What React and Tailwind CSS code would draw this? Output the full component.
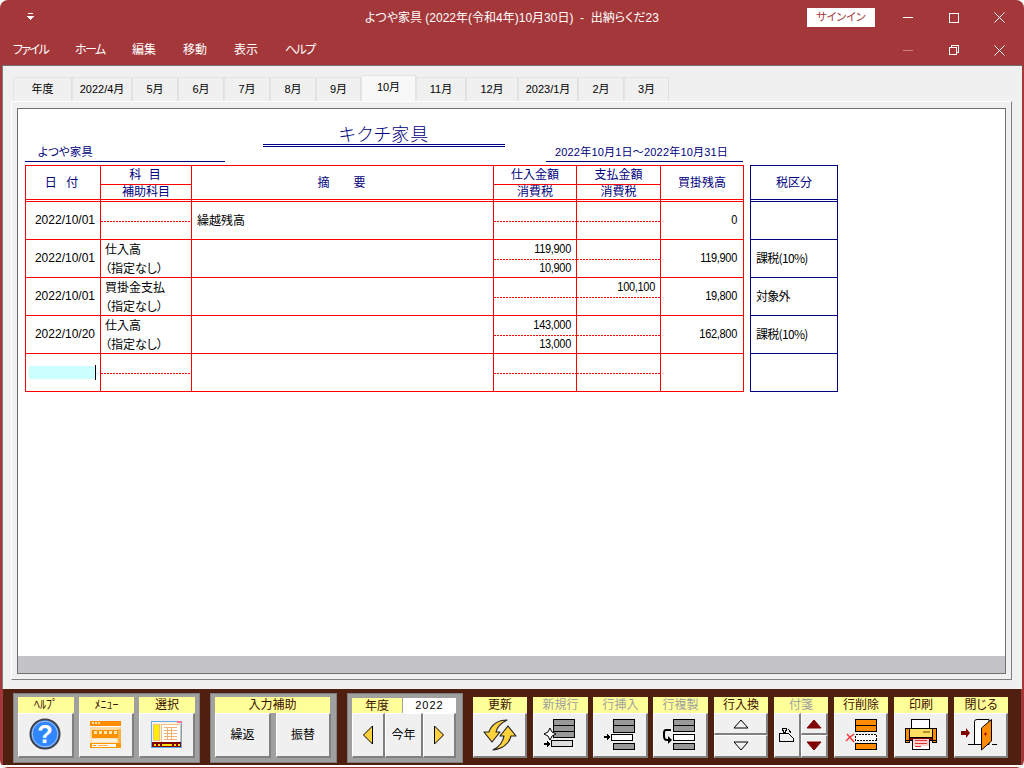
import React from "react";

const FF = { fontFamily: '"Liberation Sans","Noto Sans CJK JP",sans-serif' };

const tabs = [["年度",59],["2022/4月",60],["5月",46],["6月",46],["7月",46],["8月",46],["9月",45],["10月",55,1],["11月",50],["12月",52],["2023/1月",60],["2月",46],["3月",45]];

const Cols = [75,91,302,83,84,83];

function Two({ w, top, bottom, align = "left" }) {
  const t = align === "right" ? "justify-end pr-[5px]" : "pl-[4px]";
  return (
    <div className="flex flex-col shrink-0 border-r border-[#ff0000]" style={{ width: w }}>
      <div className={"h-[19px] flex items-center pb-px " + t}>{top}</div>
      <div className="h-px bg-[repeating-linear-gradient(90deg,#ff0000_0,#ff0000_2px,transparent_2px,transparent_3px)]" />
      <div className={"flex-1 flex items-center " + t}>{bottom}</div>
    </div>
  );
}

function Num({ children }) {
  return <span className="text-[11px] leading-none tracking-[-0.3px] text-black inline-block scale-y-[1.1]">{children}</span>;
}

function Jp({ children }) {
  return <span className="text-[12px] text-black font-['Noto_Sans_CJK_JP',sans-serif]">{children}</span>;
}

function Row({ date, k1, k2, t, p1, p2, s1, s2, bal, active }) {
  return (
    <div className="flex h-[38px] border-b border-[#ff0000]">
      <div className="w-[75px] shrink-0 border-r border-[#ff0000] flex items-center justify-end pr-[4px] pb-px">
        {active ? (
          <div className="flex items-center">
            <div className="w-[66px] h-[13px] bg-[#ccffff]" />
            <div className="w-px h-[15px] bg-black" />
          </div>
        ) : <span className="text-[12px] leading-none text-black mr-px">{date}</span>}
      </div>
      <Two w={91} top={k1 && <Jp>{k1}</Jp>} bottom={k2 && <Jp>{k2}</Jp>} />
      <div className="w-[302px] shrink-0 border-r border-[#ff0000] flex items-center pl-[5px] pb-[2px]">{t && <Jp>{t}</Jp>}</div>
      <Two w={83} align="right" top={p1 && <Num>{p1}</Num>} bottom={p2 && <Num>{p2}</Num>} />
      <Two w={84} align="right" top={s1 && <Num>{s1}</Num>} bottom={s2 && <Num>{s2}</Num>} />
      <div className="w-[83px] shrink-0 border-r border-[#ff0000] flex items-center justify-end pr-[6px] pb-px">{bal && <Num>{bal}</Num>}</div>
    </div>
  );
}

function TaxRow({ children }) {
  return <div className="h-[38px] border-b border-[#000080] flex items-center pl-[5px] pb-[2px]">{children && <span className="text-[12px] text-black tracking-[-0.7px] font-['Noto_Sans_CJK_JP',sans-serif]">{children}</span>}</div>;
}

function Btn({ className = "", children }) {
  return <div className={"flex items-center justify-center bg-[#f0f0f0] border-t border-l border-t-white border-l-white border-r-2 border-b-2 border-r-[#808080] border-b-[#808080] " + className}>{children}</div>;
}

function Label({ className = "", dim, children }) {
  return <div className={"h-[16px] bg-[#ffff99] flex items-center justify-center text-[12px] leading-none " + (dim ? "text-[#a0a0a0] " : "text-[#401000] ") + className}>{children}</div>;
}

function Tool({ label, dim, w = 55, children }) {
  return (
    <div className="flex flex-col shrink-0 pt-[8px]" style={{ width: w }}>
      <Label dim={dim}>{label}</Label>
      <Btn className="h-[45px]">{children}</Btn>
    </div>
  );
}

const Ico = ({ children, s = 40 }) => <svg width={s} height={s} viewBox={`0 0 ${s} ${s}`} shapeRendering="crispEdges">{children}</svg>;

function Help() {
  return (
    <svg width="32" height="32" viewBox="0 0 34 34" className="mr-[2px] mb-[2px]">
      <circle cx="17" cy="17" r="15.5" fill="#2f86ff" stroke="#404048" strokeWidth="2" />
      <circle cx="17" cy="17" r="13.6" fill="none" stroke="#b8c4d8" strokeWidth="1" />
      <text x="17" y="27" textAnchor="middle" fontFamily="Liberation Sans" fontWeight="700" fontSize="27" fill="#fff">?</text>
    </svg>
  );
}

function MenuIcon() {
  return (
    <svg width="32" height="28" viewBox="0 0 32 28" shapeRendering="crispEdges">
      <rect x="0" y="0" width="31" height="27" fill="#fff" />
      <rect x="0" y="0" width="31" height="5" fill="#ff8c00" />
      <rect x="2" y="1" width="2" height="2" fill="#ffe0a0" /><rect x="5" y="1" width="2" height="2" fill="#ffe0a0" /><rect x="8" y="1" width="2" height="2" fill="#ffe0a0" />
      <rect x="0" y="6" width="31" height="11" fill="#ffd9a0" />
      <rect x="2" y="9" width="26" height="8" fill="#ff9000" />
      <rect x="4" y="10" width="3" height="3" fill="#ffe9b0" /><rect x="9" y="10" width="3" height="3" fill="#ffe9b0" /><rect x="14" y="10" width="3" height="3" fill="#ffe9b0" /><rect x="19" y="10" width="3" height="3" fill="#ffe9b0" /><rect x="24" y="10" width="3" height="3" fill="#ffe9b0" />
      <rect x="0" y="17" width="31" height="5" fill="#ffe2bc" />
      <rect x="2" y="18" width="24" height="3" fill="#fff3e0" />
      <rect x="28" y="8" width="3" height="14" fill="#ffb040" />
      <rect x="0" y="22" width="31" height="5" fill="#ff9800" />
      <rect x="2" y="23" width="24" height="3" fill="#fff" />
      <rect x="3" y="24" width="3" height="1" fill="#ff9800" /><rect x="8" y="24" width="10" height="1" fill="#ffb040" />
    </svg>
  );
}

function SelectIcon() {
  return (
    <svg width="32" height="28" viewBox="0 0 32 28" shapeRendering="crispEdges">
      <rect x="0" y="0" width="31" height="27" fill="#60a8f0" />
      <rect x="1" y="1" width="29" height="25" fill="#fff3e0" />
      <rect x="26" y="0" width="5" height="2" fill="#ff70a0" />
      <rect x="2" y="3" width="6" height="16" fill="#ffee00" stroke="#f0c080" />
      <rect x="10" y="3" width="19" height="18" fill="#fff" stroke="#f0c080" />
      <rect x="13" y="6" width="13" height="1" fill="#f0b070" /><rect x="13" y="9" width="13" height="1" fill="#f0b070" /><rect x="13" y="12" width="13" height="1" fill="#f0b070" /><rect x="13" y="15" width="13" height="1" fill="#f0b070" /><rect x="13" y="18" width="13" height="1" fill="#f0b070" />
      <rect x="16" y="6" width="1" height="13" fill="#f0b070" /><rect x="20" y="6" width="1" height="13" fill="#f0b070" />
      <rect x="1" y="21" width="29" height="5" fill="#800000" />
      <rect x="3" y="23" width="2" height="2" fill="#ffe000" /><rect x="7" y="23" width="2" height="2" fill="#ffe000" /><rect x="11" y="23" width="10" height="2" fill="#ffe000" /><rect x="23" y="23" width="2" height="2" fill="#ffe000" /><rect x="27" y="23" width="2" height="2" fill="#ffe000" />
    </svg>
  );
}

function Sync() {
  return (
    <svg width="34" height="32" viewBox="0 0 34 32">
      <path d="M1 13 L6 13 C8 6 15 1 24 1 C18 4 14 8 13 13 L17 13 L9 23 Z" fill="#ffd23c" stroke="#222" strokeWidth="1.2" strokeLinejoin="round" />
      <path d="M33 17 L28 17 C26 25 19 30 10 31 C16 28 20 23 21 17 L17 17 L25 7 Z" fill="#ffd23c" stroke="#222" strokeWidth="1.2" strokeLinejoin="round" />
    </svg>
  );
}

const R = (x, y, w, h, f) => <rect x={x + 0.5} y={y + 0.5} width={w} height={h} fill={f} stroke="#000" />;
const Arr = (x, y) => <path d={`M${x} ${y - 1} h3 v-2 l3 3 l-3 3 v-2 h-3 z`} fill="#000" />;

function NewRow() {
  return <Ico>
    {R(13, 4, 21, 6, "#999")}{R(13, 10, 21, 6, "#999")}{R(13, 16, 21, 6, "#999")}
    {R(11, 25, 21, 6, "#ddd")}{Arr(4, 29)}
    <path d="M10 13 L12 17 L16 19 L12 21 L10 25 L8 21 L4 19 L8 17 Z" fill="#fff" stroke="#000" shapeRendering="auto" />
  </Ico>;
}
function InsRow() {
  return <Ico>
    {R(13, 4, 21, 6, "#999")}{R(13, 10, 21, 7, "#999")}{R(11, 19, 21, 6, "#fff")}{R(13, 28, 21, 6, "#999")}{Arr(4, 22)}
  </Ico>;
}
function DupRow() {
  return <Ico>
    {R(13, 4, 21, 6, "#999")}{R(13, 10, 21, 6, "#999")}{R(13, 19, 21, 6, "#fff")}{R(13, 28, 21, 6, "#999")}
    <path d="M11 15 H6 Q4 15 4 18 V21 Q4 25 7 25 H8" fill="none" stroke="#000" strokeWidth="2" shapeRendering="auto" />
    <path d="M8 21 L12 25 L8 29 Z" fill="#000" shapeRendering="auto" />
  </Ico>;
}
function Tri({ up, fill, stroke }) {
  return <svg width="16" height="10" viewBox="0 0 16 10">
    <path d={up ? "M8 1 L15 9 H1 Z" : "M1 1 H15 L8 9 Z"} fill={fill} stroke={stroke} />
  </svg>;
}
function Tag() {
  return <svg width="16" height="14" viewBox="0 0 16 14" shapeRendering="crispEdges" fill="none" stroke="#000">
    <path d="M0.5 5.5 H4.5 V2.5 H3.5 V0.5 H7.5 V2.5 H6.5 V5.5 H9.5 L14.5 10.5 V13.5 H0.5 Z" fill="#f0f0f0" />
    <path d="M9.5 1.5 L12.5 5.5" /><path d="M5.5 3.5 V5.5" />
  </svg>;
}
function DelRow() {
  return <Ico>
    {R(14, 4, 21, 6, "#ff8c00")}{R(14, 10, 21, 6, "#ff8c00")}
    <rect x="14.5" y="19.5" width="21" height="6" fill="#fff" stroke="#000" strokeDasharray="2 1" />
    {R(14, 28, 21, 6, "#ff8c00")}
    <path d="M6 19 L13 27 M13 19 L8 23 L5 26" stroke="#ff3030" strokeWidth="1.4" fill="none" shapeRendering="auto" />
  </Ico>;
}
function Printer() {
  return <svg width="34" height="32" viewBox="0 0 34 32" shapeRendering="crispEdges" stroke="#000">
    <rect x="7.5" y="0.5" width="18" height="10" fill="#fff" />
    <rect x="1.5" y="9.5" width="31" height="12" fill="#ff8c00" />
    <rect x="5.5" y="9.5" width="23" height="12" fill="#ffe060" />
    <rect x="19" y="12" width="7" height="2" fill="#b09030" stroke="none" />
    <rect x="1.5" y="21.5" width="4" height="2" fill="#ff8c00" /><rect x="28.5" y="21.5" width="4" height="2" fill="#ff8c00" />
    <rect x="5.5" y="18.5" width="23" height="3" fill="#800000" />
    <rect x="8.5" y="21.5" width="17" height="9" fill="#fff" stroke="#000" />
    <rect x="9" y="20" width="16" height="7" fill="#ffd0d0" stroke="none" />
    <rect x="11" y="21" width="12" height="1" fill="#e03030" stroke="none" /><rect x="11" y="24" width="12" height="1" fill="#e03030" stroke="none" /><rect x="11" y="27" width="6" height="1" fill="#e03030" stroke="none" />
  </svg>;
}
function Door() {
  return <svg width="40" height="34" viewBox="0 0 40 34">
    <path d="M0 13 h5 v-3 l4 5 l-4 5 v-3 h-5 z" fill="#800000" />
    <path d="M7 26.5 H14 M31 26.5 H36" stroke="#000" />
    <path d="M13.5 3.5 Q13.5 1.5 16 1.5 H28 V26.5 H13.5 Z" fill="#fff" stroke="#000" />
    <path d="M20.5 10 L30.5 1.5 V23 L20.5 32 Z" fill="#ff8c00" stroke="#000" />
    <path d="M23 16 h3 M24.5 14.5 v3" stroke="#900" />
  </svg>;
}

export default function App() {
  return (
    <div className="w-[1024px] h-[768px] bg-white overflow-hidden [font-feature-settings:'palt']" style={FF}>
      <div className="h-full rounded-lg bg-[#a4373a] flex flex-col overflow-hidden">
        {/* title bar */}
        <div className="h-[35px] flex items-center shrink-0 text-white">
          <div className="w-[27px]" />
          <svg width="7" height="8" viewBox="0 0 7 8" className="mb-[2px]" shapeRendering="crispEdges"><rect x="1" y="0" width="5" height="1" fill="#fff" /><path d="M0 3 h7 l-3.5 4 z" fill="#fff" /></svg>
          <div className="w-[331px]" />
          <div className="text-[12px] w-[293px] whitespace-pre">よつや家具 (2022年(令和4年)10月30日)  -  出納らくだ23</div>
          <div className="w-[149px]" />
          <div className="w-[68px] h-[19px] bg-white text-[#a4373a] text-[11px] flex items-center justify-center">サインイン</div>
          <div className="w-[28px]" />
          <div className="w-[10px] h-px bg-white" />
          <div className="w-[36px]" />
          <div className="w-[10px] h-[10px] border border-white" />
          <div className="w-[35px]" />
          <svg width="11" height="11" viewBox="0 0 11 11" stroke="#fff"><path d="M0.5 0.5 L10.5 10.5 M10.5 0.5 L0.5 10.5" /></svg>
        </div>
        {/* menu bar */}
        <div className="h-[30px] flex items-center shrink-0 text-white text-[12px]">
          <div className="w-[13px]" />
          <div className="w-[62px] tracking-[-1.6px]">ファイル</div>
          <div className="w-[57px] tracking-[-1.6px]">ホーム</div>
          <div className="w-[51px]">編集</div>
          <div className="w-[51px]">移動</div>
          <div className="w-[51px]">表示</div>
          <div className="w-[618px] tracking-[-1.6px]">ヘルプ</div>
          <div className="w-[10px] h-px bg-[#d08080]" />
          <div className="w-[36px]" />
          <svg width="10" height="10" viewBox="0 0 10 10" fill="none" stroke="#fff" shapeRendering="crispEdges"><rect x="0.5" y="2.5" width="7" height="7" /><path d="M2.5 2.5 V0.5 H9.5 V7.5 H7.5" /></svg>
          <div className="w-[35px]" />
          <svg width="11" height="11" viewBox="0 0 11 11" stroke="#fff"><path d="M0.5 0.5 L10.5 10.5 M10.5 0.5 L0.5 10.5" /></svg>
        </div>
        {/* body */}
        <div className="h-[624px] mx-[2px] shrink-0 bg-[#f0f0f0] border-t border-t-[#707070] border-l border-l-[#808080] flex flex-col">
          <div className="h-[26px] mt-[9px] ml-[10px] flex items-end shrink-0">
            {tabs.map(([t, w, a]) => (
              <div key={t} style={{ width: w }} className={a
                ? "h-[26px] bg-[#f8f8f8] border border-b-0 border-[#e4e4e4] flex items-center justify-center text-[11px] text-black pb-[3px] relative"
                : "h-[24px] bg-[#f0f0f0] border border-b-0 border-[#e4e4e4] border-r-[#e0e0e0] flex items-center justify-center text-[11px] text-black"}>{t}</div>
            ))}
          </div>
          <div className="h-[579px] ml-[8px] mr-[10px] border-l border-t border-l-white border-t-white border-r border-b border-r-[#808080] border-b-[#808080] pl-[5px] pt-[6px] pr-[5px]">
            <div className="h-[566px] border border-[#707070] bg-white flex flex-col">
              <div className="flex-1 pl-[7px] flex flex-col">
                {/* heading */}
                <div className="w-[718px] h-[56px] flex items-end justify-between text-[#000080]">
                  <div className="w-[200px] h-[17px] mb-[3px] border-b border-[#000080] pl-[13px] text-[11.5px] leading-[14px]">よつや家具</div>
                  <div className="w-[242px] mb-[18px] mr-[4px] border-b-[3px] border-double border-[#000080] text-center text-[18px] leading-[17px] tracking-[1px] pl-[1px] font-light">キクチ家具</div>
                  <div className="w-[197px] h-[17px] mb-[3px] border-b border-[#000080] flex justify-center text-[11px] leading-[14px] tracking-[0.2px] whitespace-nowrap pr-[6px]">2022年10月1日～2022年10月31日</div>
                </div>
                {/* tables */}
                <div className="flex items-start">
                  <div className="w-[719px] shrink-0 border-l border-t border-[#ff0000] flex flex-col">
                    <div className="flex h-[34px] text-[#000080] text-[12px] border-b border-[#ff0000]">
                      <div className="w-[75px] border-r border-[#ff0000] flex items-center justify-center tracking-[3px]">日 付</div>
                      <div className="w-[91px] border-r border-[#ff0000] flex flex-col">
                        <div className="h-[19px] border-b border-[#ff0000] flex items-center justify-center tracking-[2px] leading-none">科 目</div>
                        <div className="flex-1 flex items-center justify-center leading-none">補助科目</div>
                      </div>
                      <div className="w-[302px] border-r border-[#ff0000] flex items-center justify-center pr-[2px]">摘　　要</div>
                      <div className="w-[83px] border-r border-[#ff0000] flex flex-col">
                        <div className="h-[19px] border-b border-[#ff0000] flex items-center justify-center leading-none">仕入金額</div>
                        <div className="flex-1 flex items-center justify-center leading-none">消費税</div>
                      </div>
                      <div className="w-[84px] border-r border-[#ff0000] flex flex-col">
                        <div className="h-[19px] border-b border-[#ff0000] flex items-center justify-center leading-none">支払金額</div>
                        <div className="flex-1 flex items-center justify-center leading-none">消費税</div>
                      </div>
                      <div className="w-[83px] border-r border-[#ff0000] flex items-center justify-center">買掛残高</div>
                    </div>
                    <div className="flex h-[2px] border-b border-[#ff0000]">
                      {Cols.map((w, i) => <div key={i} style={{ width: w }} className="h-px border-r border-[#ff0000]" />)}
                    </div>
                    <Row date="2022/10/01" t="繰越残高" bal="0" />
                    <Row date="2022/10/01" k1="仕入高" k2="（指定なし）" p1="119,900" p2="10,900" bal="119,900" />
                    <Row date="2022/10/01" k1="買掛金支払" k2="（指定なし）" s1="100,100" bal="19,800" />
                    <Row date="2022/10/20" k1="仕入高" k2="（指定なし）" p1="143,000" p2="13,000" bal="162,800" />
                    <Row active />
                  </div>
                  <div className="w-[88px] ml-[6px] shrink-0 border-l border-r border-t border-[#000080] flex flex-col">
                    <div className="h-[34px] border-b border-[#000080] flex items-center justify-center text-[12px] text-[#000080]">税区分</div>
                    <div className="h-[2px] border-b border-[#000080]" />
                    <TaxRow />
                    <TaxRow>課税(10%)</TaxRow>
                    <TaxRow>対象外</TaxRow>
                    <TaxRow>課税(10%)</TaxRow>
                    <TaxRow />
                  </div>
                </div>
              </div>
              <div className="h-[17px] bg-[#c4c4c8] shrink-0" />
            </div>
          </div>
        </div>
        {/* toolbar */}
        <div className="h-[76px] mx-[3px] shrink-0 bg-[#4f2010] flex items-start pl-[10px]">
          <div className="mt-[4px] w-[187px] h-[70px] shrink-0 bg-[#a0a0a0] border border-[#808080] pl-[4px] pt-[3px] flex gap-[5px]">
            <div className="w-[56px] flex flex-col"><Label>ﾍﾙﾌﾟ</Label><Btn className="h-[45px]"><Help /></Btn></div>
            <div className="w-[55px] flex flex-col"><Label>ﾒﾆｭｰ</Label><Btn className="h-[45px]"><MenuIcon /></Btn></div>
            <div className="w-[56px] flex flex-col"><Label>選択</Label><Btn className="h-[45px]"><SelectIcon /></Btn></div>
          </div>
          <div className="mt-[4px] ml-[10px] w-[127px] h-[70px] shrink-0 bg-[#a0a0a0] border border-[#808080] pl-[4px] pt-[3px] flex flex-col">
            <Label className="w-[115px]">入力補助</Label>
            <div className="flex gap-[5px]">
              <Btn className="w-[56px] h-[45px] text-[12px] text-black">繰返</Btn>
              <Btn className="w-[55px] h-[45px] text-[12px] text-black">振替</Btn>
            </div>
          </div>
          <div className="mt-[4px] ml-[10px] w-[116px] h-[70px] shrink-0 bg-[#a0a0a0] border border-[#808080] pl-[4px] pt-[4px] flex flex-col">
            <div className="flex">
              <Label className="w-[50px] !h-[15px]">年度</Label>
              <div className="ml-px w-[53px] h-[15px] bg-white text-[11px] leading-none text-black flex items-center justify-center tracking-[1px]">2022</div>
            </div>
            <div className="flex h-[45px] w-[104px]">
              <Btn className="w-[33px]"><svg width="12" height="20" viewBox="0 0 12 20"><path d="M10.5 1 V19 L1.5 10 Z" fill="#ffd040" stroke="#000" /></svg></Btn>
              <Btn className="w-[38px] text-[12px] text-black">今年</Btn>
              <Btn className="w-[33px]"><svg width="12" height="20" viewBox="0 0 12 20"><path d="M1.5 1 V19 L10.5 10 Z" fill="#ffd040" stroke="#000" /></svg></Btn>
            </div>
          </div>
          <div className="w-[10px] shrink-0" />
          <Tool label="更新" w={54}><Sync /></Tool>
          <div className="w-[6px] shrink-0" />
          <Tool label="新規行" dim><NewRow /></Tool>
          <div className="w-[5px] shrink-0" />
          <Tool label="行挿入" dim><InsRow /></Tool>
          <div className="w-[5px] shrink-0" />
          <Tool label="行複製" dim><DupRow /></Tool>
          <div className="w-[6px] shrink-0" />
          <div className="w-[54px] shrink-0 flex flex-col pt-[8px]">
            <Label>行入換</Label>
            <Btn className="h-[22px]"><Tri up fill="#f0f0f0" stroke="#000" /></Btn>
            <Btn className="h-[23px]"><Tri fill="#f0f0f0" stroke="#000" /></Btn>
          </div>
          <div className="w-[6px] shrink-0" />
          <div className="w-[54px] shrink-0 flex flex-col pt-[8px]">
            <Label dim>付箋</Label>
            <div className="flex h-[45px]">
              <Btn className="w-[27px]"><Tag /></Btn>
              <div className="w-[27px] flex flex-col">
                <Btn className="h-[22px]"><Tri up fill="#800000" stroke="#800000" /></Btn>
                <Btn className="h-[23px]"><Tri fill="#800000" stroke="#800000" /></Btn>
              </div>
            </div>
          </div>
          <div className="w-[6px] shrink-0" />
          <Tool label="行削除" w={54}><DelRow /></Tool>
          <div className="w-[6px] shrink-0" />
          <Tool label="印刷" w={54}><Printer /></Tool>
          <div className="w-[6px] shrink-0" />
          <Tool label="閉じる" w={54}><Door /></Tool>
        </div>
        <div className="h-[2px] mx-[2px] bg-white shrink-0" />
      </div>
    </div>
  );
}
